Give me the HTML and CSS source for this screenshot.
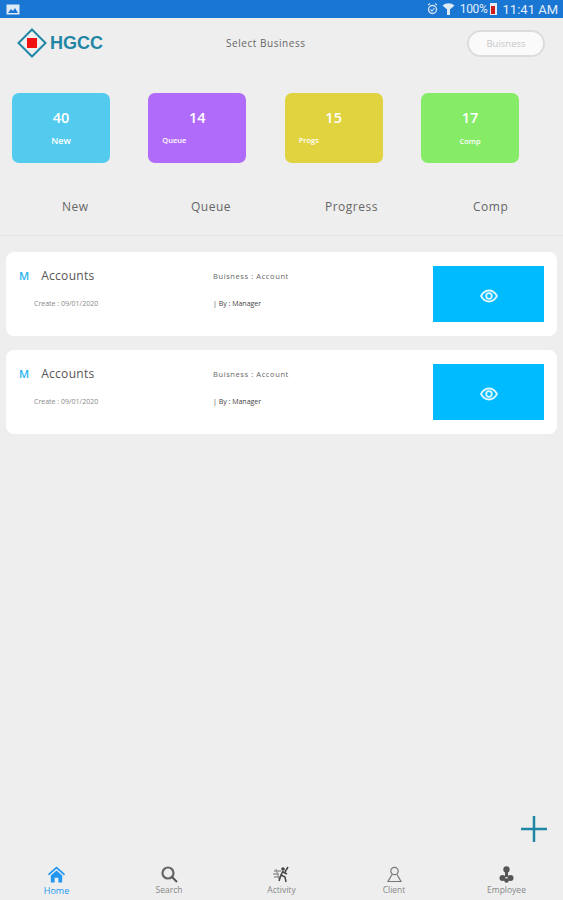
FILE: index.html
```html
<!DOCTYPE html>
<html>
<head>
  <title>HGCC</title>
  <link rel="stylesheet" href="styles.css">
</head>

<body>
  <div class="status-bar">
    <svg class="status-pic" width="14" height="11" viewBox="0 0 14 11">
      <rect x="0.5" y="0.5" width="13" height="10" fill="#dfeaf7"/>
      <path d="M2 9l3-4 2 2 2-3 3 5z" fill="#1976d2"/>
    </svg>
    <div class="status-right">
      <svg width="11" height="12" viewBox="0 0 11 12">
        <circle cx="5.5" cy="6.5" r="4" fill="none" stroke="#cfdff2" stroke-width="1.4"/>
        <path d="M3.5 6.5l1.5 1.5 2.5-3M1 2l2-1.500M10 2L8 .5" fill="none" stroke="#cfdff2" stroke-width="1.1"/>
      </svg>
      <svg width="13" height="13" viewBox="0 0 13 13">
        <path d="M.5 2.500a9 9 0 0 1 12 0L8.500 6H8v6H5V6h-.5z" fill="#dfeaf7"/>
      </svg>
      <span class="status-pct">100%</span>
      <span class="battery"><span class="battery-fill"></span></span>
      <span class="status-time">11:41 AM</span>
    </div>
  </div>

  <div class="app">
    <header class="top-bar">
      <div class="logo">
        <svg width="30" height="30" viewBox="0 0 30 30">
          <path d="M15 1.500L28.500 15 15 28.500 1.500 15z" fill="none" stroke="#1f86a5" stroke-width="2"/>
          <rect x="10" y="10" width="10" height="10" fill="#f01010"/>
        </svg>
        <span class="logo-text">HGCC</span>
      </div>
      <span class="select-label">Select Business</span>
      <div class="biz-button">Buisness</div>
    </header>

    <section class="tiles">
      <div class="tile tile-new"><b>40</b><span>New</span></div>
      <div class="tile tile-queue left"><b>14</b><span>Queue</span></div>
      <div class="tile tile-prog left"><b>15</b><span>Progs</span></div>
      <div class="tile tile-comp"><b>17</b><span>Comp</span></div>
    </section>

    <nav class="tabs">
      <span>New</span>
      <span>Queue</span>
      <span>Progress</span>
      <span>Comp</span>
    </nav>

    <main class="list">
      <article class="card">
        <div class="card-col-a">
          <div class="card-title"><span class="card-m">M</span><span>Accounts</span></div>
          <div class="card-date">Create : 09/01/2020</div>
        </div>
        <div class="card-col-b">
          <div>Buisness : Account</div>
          <div class="card-by">| By : Manager</div>
        </div>
        <div class="card-view">
          <svg width="18" height="14" viewBox="0 0 18 14">
            <path d="M1 7c2-3.500 5-5.500 8-5.500s6 2 8 5.500c-2 3.500-5 5.500-8 5.500S3 10.500 1 7z" fill="none" stroke="#dff6ff" stroke-width="1.800"/>
            <circle cx="9" cy="7" r="2.800" fill="none" stroke="#dff6ff" stroke-width="1.800"/>
          </svg>
        </div>
      </article>

      <article class="card">
        <div class="card-col-a">
          <div class="card-title"><span class="card-m">M</span><span>Accounts</span></div>
          <div class="card-date">Create : 09/01/2020</div>
        </div>
        <div class="card-col-b">
          <div>Buisness : Account</div>
          <div class="card-by">| By : Manager</div>
        </div>
        <div class="card-view">
          <svg width="18" height="14" viewBox="0 0 18 14">
            <path d="M1 7c2-3.500 5-5.500 8-5.500s6 2 8 5.500c-2 3.500-5 5.500-8 5.500S3 10.500 1 7z" fill="none" stroke="#dff6ff" stroke-width="1.800"/>
            <circle cx="9" cy="7" r="2.800" fill="none" stroke="#dff6ff" stroke-width="1.800"/>
          </svg>
        </div>
      </article>
    </main>

    <div class="fab">
      <svg width="26" height="26" viewBox="0 0 26 26">
        <path d="M13 0v26M0 13h26" stroke="#1f86a5" stroke-width="2.500"/>
      </svg>
    </div>

    <footer class="bottom-nav">
      <div class="nav-item active">
        <svg width="17" height="17" viewBox="0 0 18 17">
          <path d="M9 0L0 8l1 1.500L9 2.500l8 7L18 8z" fill="#2196f3"/>
          <path d="M3 9.500L9 4.200l6 5.300V17h-4v-5H7v5H3z" fill="#2196f3"/>
        </svg>
        <span>Home</span>
      </div>
      <div class="nav-item">
        <svg width="17" height="17" viewBox="0 0 17 17">
          <circle cx="7" cy="7" r="5.500" fill="none" stroke="#666" stroke-width="2.200"/>
          <path d="M11 11l5 5" stroke="#555" stroke-width="2"/>
        </svg>
        <span>Search</span>
      </div>
      <div class="nav-item">
        <svg width="17" height="17" viewBox="0 0 17 17">
          <path d="M1 5h7M0 8h6M1 11h6M3 3l3 10" stroke="#999" stroke-width="1.300"/>
          <circle cx="10" cy="3" r="1.800" fill="#444"/>
          <path d="M10 5l-2 4 4 2 1 5M8 9l-2 6M10 6l4 2M15 1l-3 5" fill="none" stroke="#444" stroke-width="1.500"/>
        </svg>
        <span>Activity</span>
      </div>
      <div class="nav-item">
        <svg width="17" height="17" viewBox="0 0 17 17">
          <circle cx="8.500" cy="5" r="3.700" fill="none" stroke="#777" stroke-width="1.200"/>
          <path d="M6 8.500L2 15.500h13L11 8.500" fill="none" stroke="#777" stroke-width="1.200"/>
        </svg>
        <span>Client</span>
      </div>
      <div class="nav-item">
        <svg width="15" height="17" viewBox="0 0 15 17">
          <circle cx="7.500" cy="3.500" r="3.200" fill="#555"/>
          <rect x="6" y="6" width="3" height="5" fill="#555"/>
          <circle cx="3.500" cy="12" r="3" fill="#555"/>
          <circle cx="11.500" cy="12" r="3" fill="#555"/>
          <circle cx="7.500" cy="14.500" r="2.300" fill="#555"/>
        </svg>
        <span>Employee</span>
      </div>
    </footer>
  </div>
</body>
</html>
```

FILE: styles.css
```css
* {
  box-sizing: border-box;
}

body {
  margin: 0;
  width: 563px;
  height: 900px;
  overflow: hidden;
  background: #eeeeee;
  font-family: "Open Sans", sans-serif;
  color: #444;
}

.status-bar {
  height: 18px;
  background: #1976d2;
  display: flex;
  justify-content: space-between;
  align-items: center;
  padding: 0 5px 0 6px;
}

.status-right {
  display: flex;
  align-items: center;
  gap: 4px;
  color: #e3edf8;
  font-family: "Roboto", sans-serif;
}

.status-pct {
  font-size: 12px;
  letter-spacing: -0.3px;
  margin-left: 1px;
}

.status-time {
  font-size: 13px;
  margin-left: 2px;
}

.battery {
  width: 7px;
  height: 12px;
  background: #e3edf8;
  display: flex;
  align-items: flex-end;
  padding: 3px 1.500px 1px;
  margin-left: -2px;
}

.battery-fill {
  width: 100%;
  height: 100%;
  background: #d11a1a;
}

.app {
  display: flex;
  flex-direction: column;
  height: 882px;
}

.top-bar {
  height: 50px;
  padding: 0 18px 0 17px;
  display: flex;
  align-items: center;
}

.logo {
  display: flex;
  align-items: center;
  gap: 3px;
  width: 209px;
}

.logo-text {
  font-family: "Liberation Sans", sans-serif;
  font-weight: bold;
  font-size: 18px;
  color: #1f86a5;
}

.select-label {
  font-size: 10px;
  color: #666;
  letter-spacing: 0.55px;
}

.biz-button {
  margin-left: auto;
  width: 78px;
  height: 27px;
  border-radius: 14px;
  border: 2px solid #dcdcdc;
  background: #fafafa;
  color: #c8c8c8;
  font-size: 9.500px;
  display: flex;
  align-items: center;
  justify-content: center;
}

.tiles {
  margin-top: 25px;
  padding: 0 12px;
  display: flex;
  justify-content: space-between;
  width: 531px;
}

.tile {
  width: 98px;
  height: 70px;
  border-radius: 7px;
  color: #fff;
  display: flex;
  flex-direction: column;
  align-items: center;
  padding-top: 16px;
}

.tile b {
  font-size: 14.500px;
  font-weight: 600;
  line-height: 18px;
}

.tile span {
  font-size: 7.500px;
  font-weight: 600;
  margin-top: 9px;
  line-height: 10px;
}

.tile.left span {
  align-self: flex-start;
  margin-left: 14px;
  margin-top: 8px;
}

.tile-new span {
  font-size: 9px;
}

.tile-new {
  background: #52cbef;
}

.tile-queue {
  background: #b16bfb;
}

.tile-prog {
  background: #e0d33f;
}

.tile-comp {
  background: #86ec67;
}

.tabs {
  margin-top: 35px;
  height: 31px;
  display: grid;
  grid-template-columns: 129px 134px 148px auto;
  padding-left: 62px;
  font-size: 12px;
  letter-spacing: 0.5px;
  color: #666;
}

.list {
  border-top: 1px solid #e3e3e3;
  margin-top: 6px;
  padding: 16px 6px 0 6px;
  display: flex;
  flex-direction: column;
  gap: 14px;
}

.card {
  height: 84px;
  background: #fff;
  border-radius: 8px;
  display: grid;
  grid-template-columns: 194px 220px 111px;
  padding: 14px 0 0 13px;
}

.card-title {
  display: flex;
  align-items: center;
  gap: 12px;
  font-size: 12px;
  letter-spacing: 0.3px;
  color: #555;
  height: 18px;
}

.card-m {
  color: #2ab5f0;
  font-size: 11px;
  font-weight: 600;
  letter-spacing: 0;
}

.card-date {
  font-size: 7px;
  color: #888;
  margin: 15px 0 0 15px;
}

.card-col-b {
  font-size: 7.500px;
  letter-spacing: 0.6px;
  color: #666;
  padding-top: 5px;
}

.card-by {
  margin-top: 18px;
  font-size: 7px;
  letter-spacing: 0;
  color: #444;
}

.card-view {
  width: 111px;
  height: 56px;
  padding-top: 4px;
  background: #00bbff;
  display: flex;
  align-items: center;
  justify-content: center;
}

.fab {
  position: absolute;
  left: 521px;
  top: 816px;
  width: 26px;
  height: 26px;
}

.fab svg {
  display: block;
}

.bottom-nav {
  margin-top: auto;
  height: 40px;
  padding-top: 6px;
  display: grid;
  grid-template-columns: 113px 112px 113px 112px 113px;
}

.nav-item {
  display: flex;
  flex-direction: column;
  align-items: center;
  font-size: 8.500px;
  color: #888;
}

.nav-item span {
  margin-top: 1px;
}

.nav-item.active {
  color: #2196f3;
}

.nav-item.active span {
  font-size: 9px;
}
```
